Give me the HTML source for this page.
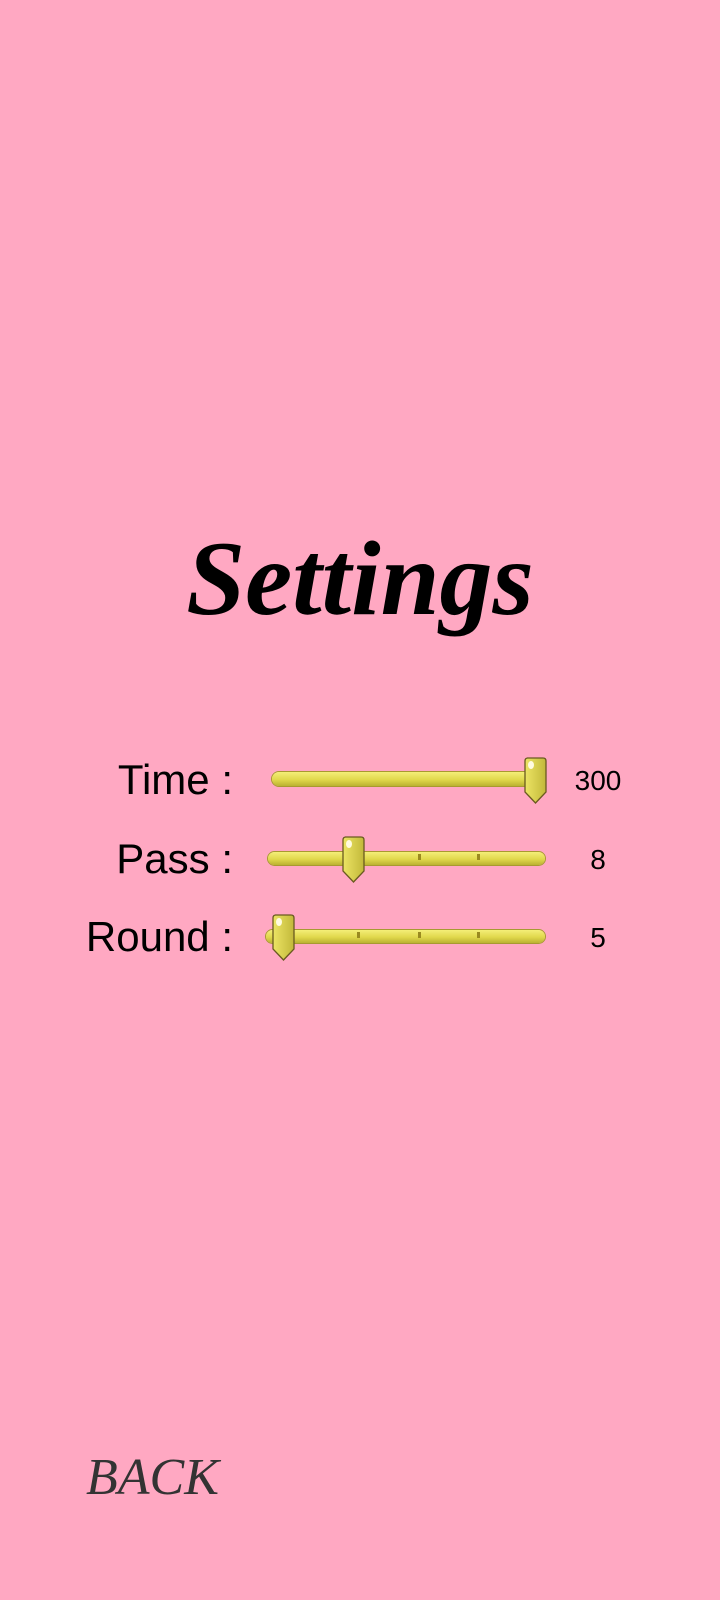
<!DOCTYPE html>
<html><head><style>
body{margin:0;width:720px;height:1600px;background:#ffa8c2;position:relative;overflow:hidden;font-family:"Liberation Sans",sans-serif;}
.t{position:absolute;color:#000}
.lab{font-size:42px;right:487px;text-align:right;white-space:nowrap}
.val{font-size:28px;width:80px;left:558px;text-align:center}
.track{position:absolute;height:13px;border-radius:7px;background:linear-gradient(#f4ee78,#e0d84c 55%,#bcb232);box-shadow:0 0 0 1px #a89a30;}
.th{position:absolute;}
</style></head><body>
<div class="t" style="left:0;width:720px;top:518px;text-align:center;font-family:'Liberation Serif',serif;font-style:italic;font-weight:bold;font-size:106px;">Settings</div>

<div class="t lab" style="top:756px">Time :</div>
<div class="t lab" style="top:835px">Pass :</div>
<div class="t lab" style="top:913px">Round :</div>
<div class="t val" style="top:765px">300</div>
<div class="t val" style="top:844px">8</div>
<div class="t val" style="top:922px">5</div>

<div class="track" style="left:272px;top:772px;width:262px;height:14px"></div>
<div class="track" style="left:268px;top:852px;width:277px"></div>
<div class="track" style="left:266px;top:930px;width:279px"></div>
<div style="position:absolute;left:418px;top:854px;width:3px;height:6px;background:#9a8a20"></div>
<div style="position:absolute;left:477px;top:854px;width:3px;height:6px;background:#9a8a20"></div>
<div style="position:absolute;left:357px;top:932px;width:3px;height:6px;background:#9a8a20"></div>
<div style="position:absolute;left:418px;top:932px;width:3px;height:6px;background:#9a8a20"></div>
<div style="position:absolute;left:477px;top:932px;width:3px;height:6px;background:#9a8a20"></div>

<svg class="th" style="left:523px;top:757px" width="25" height="48" viewBox="0 0 25 48"><defs><linearGradient id="g" x1="0" x2="1"><stop offset="0" stop-color="#ece464"/><stop offset="1" stop-color="#c2b83a"/></linearGradient></defs><path d="M4 1H20Q23 1 23 4V35L12.5 46L2 35V4Q2 1 5 1Z" fill="url(#g)" stroke="#6a5a20" stroke-width="1.3"/><ellipse cx="8" cy="8" rx="3" ry="4" fill="#fffbe0"/></svg>
<svg class="th" style="left:341px;top:836px" width="25" height="48" viewBox="0 0 25 48"><path d="M4 1H20Q23 1 23 4V35L12.5 46L2 35V4Q2 1 5 1Z" fill="url(#g)" stroke="#6a5a20" stroke-width="1.3"/><ellipse cx="8" cy="8" rx="3" ry="4" fill="#fffbe0"/></svg>
<svg class="th" style="left:271px;top:914px" width="25" height="48" viewBox="0 0 25 48"><path d="M4 1H20Q23 1 23 4V35L12.5 46L2 35V4Q2 1 5 1Z" fill="url(#g)" stroke="#6a5a20" stroke-width="1.3"/><ellipse cx="8" cy="8" rx="3" ry="4" fill="#fffbe0"/></svg>

<div class="t" style="left:86px;top:1448px;font-family:'Liberation Serif',serif;font-style:italic;font-size:52px;color:#333;">BACK</div>
</body></html>
